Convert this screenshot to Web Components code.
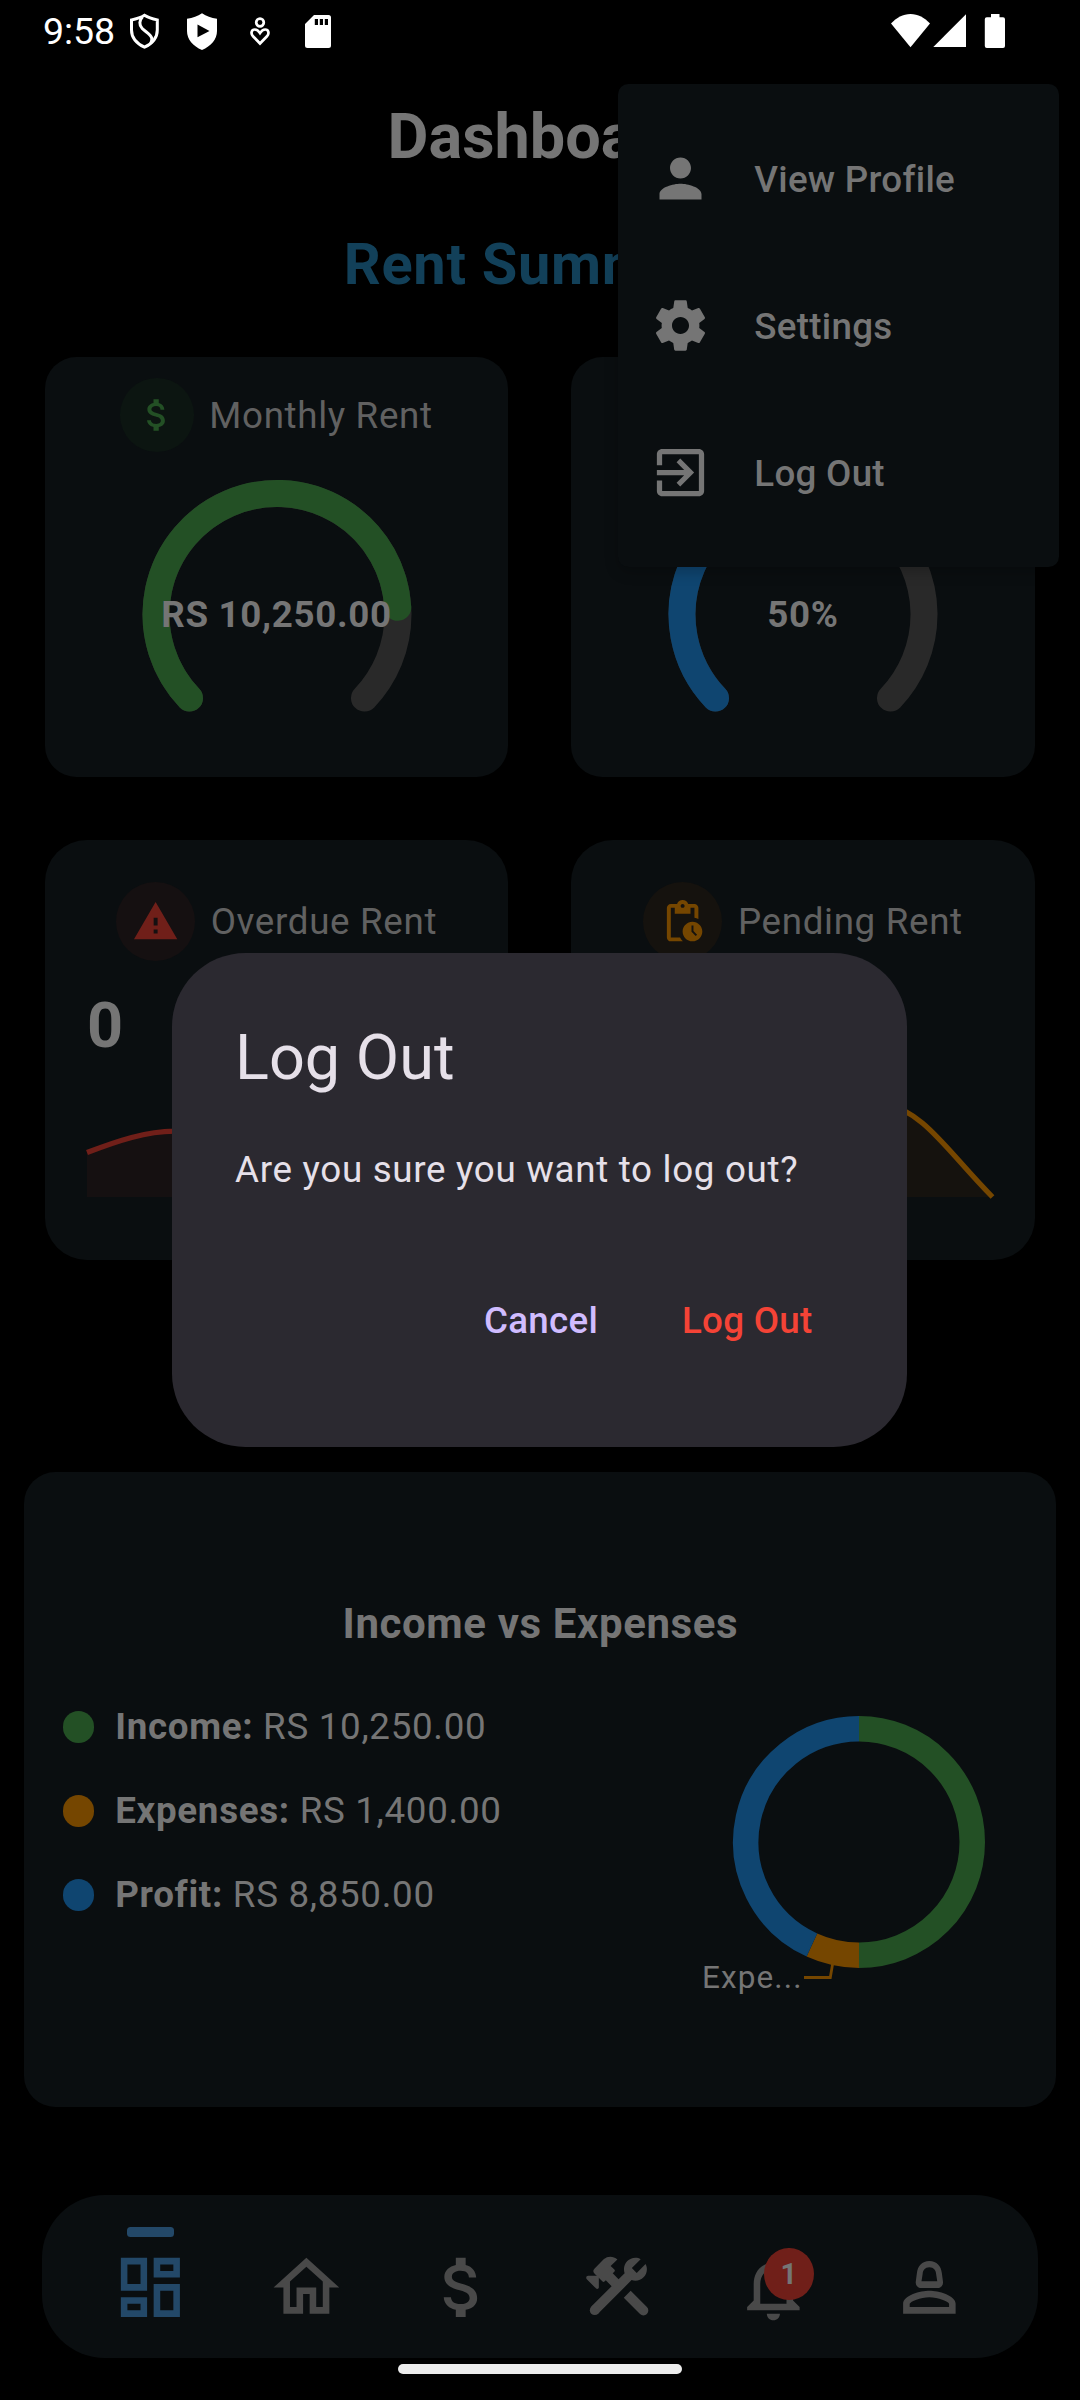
<!DOCTYPE html>
<html lang="en">
<head>
<meta charset="utf-8">
<title>Dashboard</title>
<style>
html,body{margin:0;padding:0;background:#000}
body{width:1080px;height:2400px;overflow:hidden;font-family:Roboto,"Liberation Sans",sans-serif}
</style>
</head>
<body>
<rent-app></rent-app>
<script>
const ICONS = {
  person: '<path d="M12 12c2.21 0 4-1.79 4-4s-1.79-4-4-4-4 1.79-4 4 1.79 4 4 4zm0 2c-2.67 0-8 1.34-8 4v2h16v-2c0-2.66-5.33-4-8-4z"/>',
  settings: '<path d="M19.14 12.94c.04-.3.06-.61.06-.94 0-.32-.02-.64-.07-.94l2.03-1.58c.18-.14.23-.41.12-.61l-1.92-3.32c-.12-.22-.37-.29-.59-.22l-2.39.96c-.5-.38-1.03-.7-1.62-.94l-.36-2.54c-.04-.24-.24-.41-.48-.41h-3.84c-.24 0-.43.17-.47.41l-.36 2.54c-.59.24-1.13.57-1.62.94l-2.39-.96c-.22-.08-.47 0-.59.22L2.74 8.87c-.12.21-.08.47.12.61l2.03 1.58c-.05.3-.09.63-.09.94s.02.64.07.94l-2.03 1.58c-.18.14-.23.41-.12.61l1.92 3.32c.12.22.37.29.59.22l2.39-.96c.5.38 1.03.7 1.62.94l.36 2.54c.05.24.24.41.48.41h3.84c.24 0 .44-.17.47-.41l.36-2.54c.59-.24 1.13-.56 1.62-.94l2.39.96c.22.08.47 0 .59-.22l1.92-3.32c.12-.22.07-.47-.12-.61l-2.01-1.58zM12 15.25c-1.8 0-3.25-1.45-3.25-3.25s1.45-3.25 3.25-3.25 3.25 1.45 3.25 3.25-1.45 3.25-3.25 3.25z"/>',
  exit: '<path d="M3 9.2V5c0-1.1.9-2 2-2h14c1.1 0 2 .9 2 2v14c0 1.1-.9 2-2 2H5c-1.1 0-2-.9-2-2v-4h2v4h14V5H5v4.2zM10.5 15.9l1.4 1.4L17.2 12l-5.3-5.3-1.4 1.4 2.9 2.9H3v2h10.4z"/>',
  money: '<path d="M11.8 10.9c-2.27-.59-3-1.2-3-2.15 0-1.09 1.01-1.85 2.7-1.85 1.78 0 2.44.85 2.5 2.1h2.21c-.07-1.72-1.12-3.3-3.21-3.81V3h-3v2.16c-1.94.42-3.5 1.68-3.5 3.61 0 2.31 1.91 3.46 4.7 4.13 2.5.6 3 1.48 3 2.41 0 .69-.49 1.79-2.7 1.79-2.06 0-2.87-.92-2.98-2.1h-2.2c.12 2.19 1.76 3.42 3.68 3.83V21h3v-2.15c1.95-.37 3.5-1.5 3.5-3.55 0-2.84-2.43-3.81-4.7-4.4z"/>',
  warning: '<path d="M1 21h22L12 2 1 21zm12-3h-2v-2h2v2zm0-4h-2v-4h2v4z"/>',
  pending: '<path d="M17 12c-2.76 0-5 2.24-5 5s2.24 5 5 5 5-2.24 5-5-2.24-5-5-5zm1.65 7.35L16.5 17.2V14h1v2.79l1.85 1.85-.7.71zM18 3h-3.18C14.4 1.84 13.3 1 12 1s-2.4.84-2.82 2H6c-1.1 0-2 .9-2 2v15c0 1.1.9 2 2 2h6.11c-.59-.57-1.07-1.25-1.42-2H6V5h2v3h8V5h2v5.08c.71.1 1.38.31 2 .6V5c0-1.1-.9-2-2-2zm-6 2c-.55 0-1-.45-1-1s.45-1 1-1 1 .45 1 1-.45 1-1 1z"/>',
  dashboard: '<path d="M19 5v2h-4V5h4M9 5v6H5V5h4m10 8v6h-4v-6h4M9 17v2H5v-2h4M21 3h-8v6h8V3zM11 3H3v10h8V3zm10 8h-8v10h8V11zm-10 4H3v6h8v-6z"/>',
  home: '<path d="M12 5.69l5 4.5V18h-2v-6H9v6H7v-7.81l5-4.5M12 3L2 12h3v8h6v-6h2v6h6v-8h3L12 3z"/>',
  tools: '<path d="M17.5 10c1.93 0 3.5-1.57 3.5-3.5 0-.58-.16-1.12-.41-1.6l-2.7 2.7-1.49-1.49 2.7-2.7C18.62 3.16 18.08 3 17.5 3 15.57 3 14 4.57 14 6.5c0 .41.08.8.21 1.16l-1.85 1.85-1.78-1.78.5-.5c.2-.2.2-.5 0-.7L9.95 5.5 12 3.49c-1.2-1.1-3-1.15-4.1-.1L5 6.3c-.45.45-.45 1.05 0 1.45l2.4 2.4c.25.25.5.25.75 0l.32-.3 1.78 1.78-6.2 6.2 2.12 2.12L16.34 9.79c.36.13.75.21 1.16.21z"/><circle cx="5.1" cy="18.95" r="1.5"/><path d="M3.1 8.45h2.85c.25 0 .4.15.4.4v3.1c0 .5-.55.7-.9.35L2.75 9.6c-.45-.45-.25-1.15.35-1.15z"/><path d="M13.95 15.15l2.1-2.1 4.95 4.95a1.48 1.48 0 0 1-2.1 2.1z"/>',
  bell: '<path d="M12 22c1.1 0 2-.9 2-2h-4c0 1.1.9 2 2 2zm6-6v-5c0-3.07-1.63-5.64-4.5-6.32V4c0-.83-.67-1.5-1.5-1.5s-1.5.67-1.5 1.5v.68C7.64 5.36 6 7.92 6 11v5l-2 2v1h16v-1l-2-2zm-2 1H8v-6c0-2.48 1.51-4.5 4-4.5s4 2.02 4 4.5v6z"/>',
  account: '<path fill-rule="evenodd" d="M12 3.95c2.25 0 3.6 1.6 3.8 3.7l.35 2.6c.15 1.1-.55 1.95-1.65 1.95h-5c-1.1 0-1.8-.85-1.65-1.95l.35-2.6c.2-2.1 1.55-3.7 3.8-3.7zm0 1.9c-1.35 0-1.95.9-2.05 2.05l-.35 2.25h4.8l-.35-2.25c-.1-1.15-.7-2.05-2.05-2.05z"/><path d="M12 13c-2.67 0-8 1.34-8 4v3h16v-3c0-2.66-5.33-4-8-4zm6 5H6v-.99c.2-.72 3.3-2.01 6-2.01s5.8 1.29 6 2v1z"/>'
};

class MdIcon extends HTMLElement {
  connectedCallback() {
    const s = this.getAttribute('size');
    this.attachShadow({mode: 'open'}).innerHTML =
      `<style>:host{display:block;flex:none;width:${s}px;height:${s}px}svg{display:block;width:100%;height:100%;fill:currentColor}</style>
       <svg viewBox="0 0 24 24">${ICONS[this.getAttribute('name')]}</svg>`;
  }
}
customElements.define('md-icon', MdIcon);

class StatusBar extends HTMLElement {
  constructor() {
    super();
    this.attachShadow({mode: 'open'}).innerHTML = `
<style>
:host{display:flex;height:63px;box-sizing:border-box;padding:0 74px 0 43px;justify-content:space-between;color:#fff;font-size:37.5px}
div{display:flex;align-items:center;height:62px}
svg{display:block;flex:none;height:40px}
.time{line-height:63px;width:70px;margin-right:13px;letter-spacing:-.1px}
</style>
<div><span class="time">9:58</span>
<svg width="38" viewBox="126 11 38 40" fill="none" stroke="#fff" stroke-width="3"><path d="M144.500 15.300c4 2.600 8 3.700 12.800 4.600v10c0 8-5 13.500-12.800 17.300-7.800-3.800-13-9.300-13-17.300v-10c5-.9 9-2 13-4.600z"/><path d="M142.500 17c-3.200 3-3.700 8-.3 11.500 3.500 3.500 8.300 5.500 9.500 9.500.5 2 .2 3.500-1 5.500"/></svg>
<svg width="38" style="margin-left:19px" viewBox="183 11 38 40"><path fill="#fff" d="M202 13.300c4.500 3 9 4.500 15 5.500v12.200c0 8.500-6 15-15 19-9-4-15-10.500-15-19V18.800c6-1 10.500-2.500 15-5.500z"/><path d="M197.500 24.500v12.800l12-6.400z"/></svg>
<svg width="30" style="margin-left:24px" viewBox="245 11 30 40" fill="none" stroke="#fff" stroke-width="2.700"><circle cx="260" cy="22.500" r="3.800"/><path d="M260 43.500l-7-7.300c-2.600-2.700-1.500-6.700 1.800-6.700 2.500 0 3.800 1.400 5.200 3.600 1.400-2.200 2.700-3.600 5.200-3.600 3.300 0 4.400 4 1.800 6.700z"/></svg>
<svg width="30" style="margin-left:28px" viewBox="303 11 30 40"><path fill="#fff" d="M314 15h14.500a2.500 2.500 0 0 1 2.500 2.500v28a2.500 2.500 0 0 1-2.500 2.500h-21a2.500 2.500 0 0 1-2.500-2.500V24z"/><path d="M314.800 19h3.200v6h-3.200zM319.800 19h3.200v6h-3.200zM324.800 19h3.200v6h-3.200z"/></svg>
</div>
<div><svg width="117" viewBox="889 11 117 40" fill="#fff"><path d="M910.500 47.200L891 23.600c5.500-6 12-9.600 19.500-9.600s14 3.600 19.500 9.600z"/><path d="M966 14.300V47h-32.700z"/><path d="M991 14h8.500v3.300h3.500a2 2 0 0 1 2 2V46a2 2 0 0 1-2 2h-16.200a2 2 0 0 1-2-2V19.300a2 2 0 0 1 2-2h4.200z"/></svg></div>`;
  }
}
customElements.define('status-bar', StatusBar);

class StatCard extends HTMLElement {
  constructor() {
    super();
    this.attachShadow({mode: 'open'}).innerHTML = `
<style>
:host{display:flex;flex-direction:column;box-sizing:border-box;height:420px;background:#0a0e10;border-radius:31.5px;padding-top:21px}
:host([kind=chart]){border-radius:42px;padding-top:42px}
.head{display:flex;align-items:center;justify-content:center;gap:15.5px;height:73.5px;flex:none;color:#616161;font-size:36.75px;letter-spacing:.66px}
:host([kind=chart]) .head{height:78.75px;gap:16px}
.label{line-height:44px;padding-top:1.500px}
.badge{display:flex;border-radius:50%;padding:15.75px;color:var(--tint);background:var(--halo)}
</style>
<div class="head"></div><slot></slot>`;
  }
  connectedCallback() {
    const label = this.getAttribute('label');
    if (label) this.shadowRoot.querySelector('.head').innerHTML =
      `<span class="badge"><md-icon name="${this.getAttribute('icon')}" size="${this.getAttribute('kind') === 'chart' ? 47.25 : 42}"></md-icon></span><span class="label">${label}</span>`;
  }
}
customElements.define('stat-card', StatCard);

class RadialGauge extends HTMLElement {
  connectedCallback() {
    const pt = a => { const r = a * Math.PI / 180; return `${(135 + 121 * Math.cos(r)).toFixed(2)} ${(134.5 + 121 * Math.sin(r)).toFixed(2)}`; };
    const arc = (a, b) => `M${pt(a)}A121 121 0 ${b - a > 180 ? 1 : 0} 1 ${pt(b)}`;
    const start = 136.3;
    this.attachShadow({mode: 'open'}).innerHTML = `
<style>
:host{display:grid;place-items:center;align-self:center;width:270px;height:269px;margin-top:28.500px;font-size:36.75px;font-weight:700;color:#757575;letter-spacing:.66px;white-space:nowrap}
svg,span{grid-area:1/1}
svg{display:block;fill:none;stroke-width:27;stroke-linecap:round}
</style>
<svg width="270" height="269"><path stroke="#292929" d="${arc(start, 403.7)}"/><path stroke="${this.getAttribute('color')}" d="${arc(start, +this.getAttribute('end'))}"/></svg>
<span><slot></slot></span>`;
  }
}
customElements.define('radial-gauge', RadialGauge);

class TrendChart extends HTMLElement {
  connectedCallback() {
    const c = this.getAttribute('curve');
    this.attachShadow({mode: 'open'}).innerHTML = `
<style>
:host{display:block;padding:28px 42px 0}
.value{height:74px;line-height:74px;font-size:63px;font-weight:700;color:#757575}
svg{display:block;margin-top:8px;overflow:visible;width:379.500px;height:126px}
</style>
<div class="value"><slot></slot></div>
<svg viewBox="0 0 379.500 126"><path fill="${this.getAttribute('fill')}" d="M0 126L${c.slice(1)}L379.500 126z"/><path fill="none" stroke="${this.getAttribute('color')}" stroke-width="5.250" d="${c}"/></svg>`;
  }
}
customElements.define('trend-chart', TrendChart);

class LegendRow extends HTMLElement {
  constructor() {
    super();
    this.attachShadow({mode: 'open'}).innerHTML = `
<style>
:host{display:flex;align-items:center;gap:21px;height:84px;font-size:36.75px;letter-spacing:.68px;color:#757575;white-space:pre}
i{width:31.500px;height:31.500px;border-radius:50%;background:var(--tint)}
</style>
<i></i><span><slot></slot></span>`;
  }
}
customElements.define('legend-row', LegendRow);

class IncomeCard extends HTMLElement {
  constructor() {
    super();
    this.attachShadow({mode: 'open'}).innerHTML = `
<style>
:host{display:block;box-sizing:border-box;height:635px;margin:212px 24px 0;padding:124.500px 21px 0 38.750px;background:#0a0e10;border-radius:31.500px}
h3{margin:0 0 0 -17px;text-align:center;font-size:42px;line-height:56px;font-weight:700;color:#757575;letter-spacing:.6px}
.row{display:flex;justify-content:space-between}
.legend{padding-top:32.500px}
b{font-weight:700}
svg{display:block;margin-top:47.500px}
</style>
<h3>Income vs Expenses</h3>
<div class="row">
<div class="legend">
<legend-row style="--tint:#235025"><b>Income: </b>RS 10,250.00</legend-row>
<legend-row style="--tint:#754600"><b>Expenses: </b>RS 1,400.00</legend-row>
<legend-row style="--tint:#0f4570"><b>Profit: </b>RS 8,850.00</legend-row>
</div>
<svg width="345" height="310" viewBox="690 1700 345 310">
<g fill="none" stroke-width="25.500">
<path stroke="#235025" d="M859 1728.750A113.250 113.250 0 0 1 859 1955.250"/>
<path stroke="#754600" d="M859 1955.250A113.250 113.250 0 0 1 811.900 1944.990"/>
<path stroke="#0f4570" d="M811.900 1944.990A113.250 113.250 0 0 1 859 1728.750"/>
</g>
<path fill="none" stroke="#754600" stroke-width="2.800" d="M832.600 1964L830.300 1977.500H804"/>
<text x="702" y="1988" font-size="31.500" letter-spacing="1.100" fill="#757575">Expe...</text>
</svg>
</div>`;
  }
}
customElements.define('income-card', IncomeCard);

class NavItem extends HTMLElement {
  connectedCallback() {
    const badge = this.getAttribute('badge');
    this.attachShadow({mode: 'open'}).innerHTML = `
<style>
:host{display:flex;flex:1;flex-direction:column;align-items:center;position:relative;padding-top:32px;color:#494949}
:host([active]){color:#234868}
i{width:47px;height:10px;border-radius:3.500px;margin-bottom:11px}
:host([active]) i{background:currentColor}
.badge{position:absolute;left:68.500px;top:53px;width:49.500px;height:52px;line-height:53px;border-radius:50%;background:#701f19;color:#757575;text-align:center;font-size:28.900px;font-weight:700}
</style>
<i></i><md-icon name="${this.getAttribute('icon')}" size="78.750"></md-icon>${badge ? `<span class="badge">${badge}</span>` : ''}`;
  }
}
customElements.define('nav-item', NavItem);

class BottomNav extends HTMLElement {
  constructor() {
    super();
    this.attachShadow({mode: 'open'}).innerHTML = `
<style>
:host{display:flex;box-sizing:border-box;height:163px;margin:88px 42px 0;padding:0 31px 0 30.500px;background:#0a0e10;border-radius:63px}
</style>
<nav-item icon="dashboard" active></nav-item><nav-item icon="home"></nav-item><nav-item icon="money"></nav-item><nav-item icon="tools"></nav-item><nav-item icon="bell" badge="1"></nav-item><nav-item icon="account"></nav-item>`;
  }
}
customElements.define('bottom-nav', BottomNav);

class MenuItem extends HTMLElement {
  connectedCallback() {
    this.attachShadow({mode: 'open'}).innerHTML = `
<style>:host{display:flex;align-items:center;gap:42px;height:147px;padding-left:31.250px;font-size:36.75px;font-weight:500;letter-spacing:.28px;color:#757575}
span{line-height:44px;padding-top:2px}</style>
<md-icon name="${this.getAttribute('icon')}" size="63"></md-icon><span><slot></slot></span>`;
  }
}
customElements.define('menu-item', MenuItem);

class PopupMenu extends HTMLElement {
  constructor() {
    super();
    this.attachShadow({mode: 'open'}).innerHTML = `
<style>:host{display:block;position:absolute;left:618px;top:84px;width:441px;box-sizing:border-box;padding:21px 0;background:#0a0e10;border-radius:10.500px;box-shadow:0 5px 14px rgba(0,0,0,.22)}</style>
<menu-item icon="person">View Profile</menu-item><menu-item icon="settings">Settings</menu-item><menu-item icon="exit">Log Out</menu-item>`;
  }
}
customElements.define('popup-menu', PopupMenu);

class ConfirmDialog extends HTMLElement {
  constructor() {
    super();
    this.attachShadow({mode: 'open'}).innerHTML = `
<style>
:host{display:block;position:absolute;left:172px;top:953px;width:735px;height:494px;box-sizing:border-box;padding:63px;background:#2b2930;border-radius:73.500px;color:#e6e0e9}
h2{margin:0;font-size:63px;line-height:84px;font-weight:400}
p{margin:43px 0 62px;font-size:36.75px;line-height:53px;letter-spacing:.69px;white-space:nowrap}
.actions{display:flex;justify-content:flex-end;gap:21px}
button{all:unset;padding:0 31.500px;height:126px;line-height:126px;font-size:36.75px;font-weight:500;letter-spacing:.26px;color:#d0bcff}
button.danger{color:#f44336}
</style>
<h2><slot name="title"></slot></h2><p><slot></slot></p>
<div class="actions"><button>Cancel</button><button class="danger">Log Out</button></div>`;
  }
}
customElements.define('confirm-dialog', ConfirmDialog);

class RentApp extends HTMLElement {
  constructor() {
    super();
    this.attachShadow({mode: 'open'}).innerHTML = `
<style>
:host{display:block;position:relative;width:1080px;height:2400px;background:#000;overflow:hidden}
h1{margin:0;height:147px;line-height:147px;text-align:center;font-size:63px;font-weight:700;color:#757575}
h2{margin:0 0 38px;height:109px;line-height:109px;text-align:center;font-size:57.750px;font-weight:700;color:#124059;letter-spacing:.7px}
.cards{display:grid;grid-template-columns:463px 464px;gap:63px;padding:0 45px}
.cards+.cards{margin-top:62.750px}
.home{width:284px;height:10px;border-radius:5px;background:#ececec;margin:6px auto 0}
</style>
<status-bar></status-bar>
<h1>Dashboard</h1>
<h2>Rent Summary</h2>
<div class="cards">
<stat-card label="Monthly Rent" icon="money" style="--tint:#235025;--halo:#0c1511"><radial-gauge color="#235025" end="356.600">RS 10,250.00</radial-gauge></stat-card>
<stat-card><radial-gauge color="#0f4570" end="270">50%</radial-gauge></stat-card>
</div>
<div class="cards">
<stat-card kind="chart" label="Overdue Rent" icon="warning" style="--tint:#701f19;--halo:#151011"><trend-chart color="#701f19" fill="#151011" curve="M0 81.500C30 70 60 60 87 60C150 58 190 30 240 40S330 90 379.500 126">0</trend-chart></stat-card>
<stat-card kind="chart" label="Pending Rent" icon="pending" style="--tint:#754600;--halo:#15120e"><trend-chart color="#754600" fill="#15120e" curve="M0 81.500C40 60 70 60 126 80S220 25 270 32C311 40 334 80 379.500 126"></trend-chart></stat-card>
</div>
<income-card></income-card>
<bottom-nav></bottom-nav>
<div class="home"></div>
<popup-menu></popup-menu>
<confirm-dialog><span slot="title">Log Out</span>Are you sure you want to log out?</confirm-dialog>`;
  }
}
customElements.define('rent-app', RentApp);
</script>
</body>
</html>
